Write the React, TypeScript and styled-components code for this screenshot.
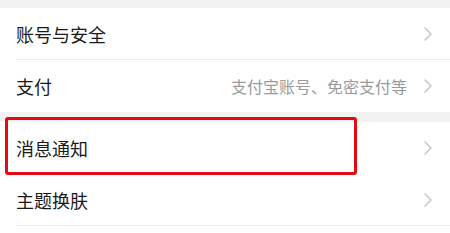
import { createGlobalStyle } from "styled-components"
import styled from "styled-components"

const GlobalStyle = createGlobalStyle`
  html, body {
    margin: 0;
    padding: 0;
    background: #f2f2f2;
  }
  body {
    font-family: "Noto Sans CJK SC", "Noto Sans", sans-serif;
  }
`

const Page = styled.div`
  width: 450px;
  height: 233px;
  overflow: hidden;
  background: #f2f2f2;
  padding-top: 8px;
  box-sizing: border-box;
  display: flex;
  flex-direction: column;
`

const Group = styled.div<{ $gap?: number; $fill?: boolean }>`
  background: #ffffff;
  margin-top: ${({ $gap }) => ($gap ? `${$gap}px` : "0")};
  flex: ${({ $fill }) => ($fill ? "1" : "none")};
`

const Row = styled.div<{ $divider?: boolean }>`
  position: relative;
  height: 52px;
  display: flex;
  align-items: center;
  padding: 0 18px 0 16px;
  box-sizing: border-box;

  &::after {
    content: "";
    display: ${({ $divider }) => ($divider ? "block" : "none")};
    position: absolute;
    left: 16px;
    right: 0;
    bottom: 0;
    height: 1px;
    background: #ececec;
  }
`

const Title = styled.span`
  flex: 1;
  font-size: 18px;
  color: #1a1a1a;
  line-height: 1;
`

const Hint = styled.span`
  font-size: 16px;
  color: #9a9a9a;
  margin-right: 17px;
  line-height: 1;
`

const Chevron = styled.svg`
  width: 8px;
  height: 14px;
  flex: none;
`

const Highlight = styled.div`
  position: absolute;
  left: 5px;
  top: -5px;
  width: 352px;
  height: 58px;
  border: 3px solid #e50914;
  border-radius: 3px;
  box-sizing: border-box;
  pointer-events: none;
`

const Arrow = () => (
  <Chevron viewBox="0 0 8 14">
    <path d="M1 1 L7 7 L1 13" fill="none" stroke="#c2c2c2" strokeWidth="1.4" strokeLinecap="round" strokeLinejoin="round" />
  </Chevron>
)

const App = () => (
  <Page>
    <GlobalStyle />
    <Group>
      <Row $divider>
        <Title>账号与安全</Title>
        <Arrow />
      </Row>
      <Row>
        <Title>支付</Title>
        <Hint>支付宝账号、免密支付等</Hint>
        <Arrow />
      </Row>
    </Group>
    <Group $gap={10} $fill>
      <Row $divider={false}>
        <Title>消息通知</Title>
        <Arrow />
        <Highlight />
      </Row>
      <Row $divider>
        <Title>主题换肤</Title>
        <Arrow />
      </Row>
    </Group>
  </Page>
)

export default App
